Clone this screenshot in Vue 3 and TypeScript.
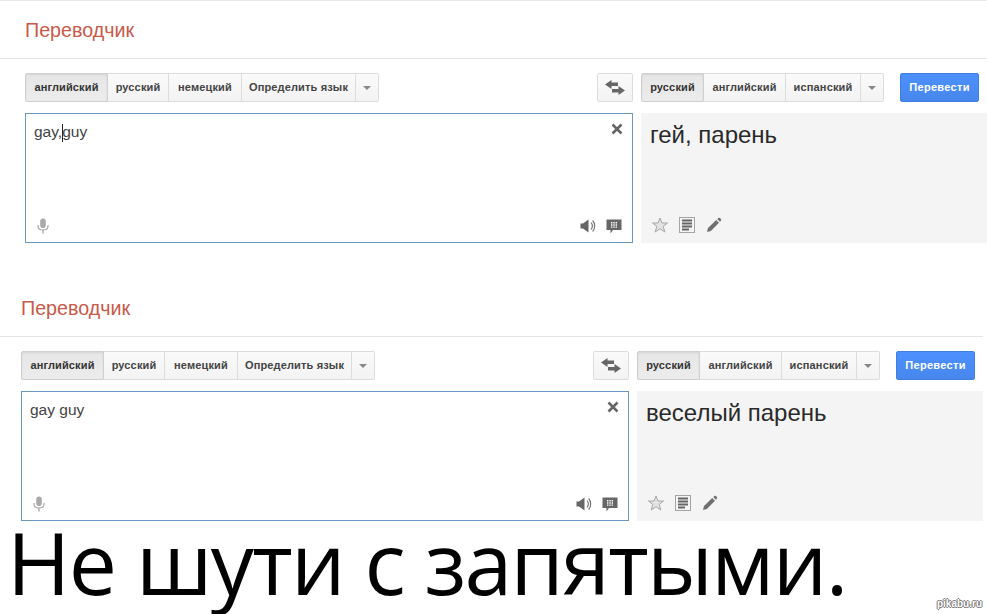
<script setup lang="ts">
interface Lang { label: string; width: number; active?: boolean }
interface Sheet { key: string; shift: boolean; source: string; caret: boolean; result: string }

const sourceLangs: Lang[] = [
  { label: 'английский', width: 83, active: true },
  { label: 'русский', width: 61 },
  { label: 'немецкий', width: 73 },
  { label: 'Определить язык', width: 114 },
]
const targetLangs: Lang[] = [
  { label: 'русский', width: 63, active: true },
  { label: 'английский', width: 82 },
  { label: 'испанский', width: 75 },
]
const sheets: Sheet[] = [
  { key: 'a', shift: false, source: 'gay,', caret: true, result: 'гей, парень' },
  { key: 'b', shift: true, source: 'gay ', caret: false, result: 'веселый парень' },
]
</script>

<template>
  <div class="page">
    <section v-for="s in sheets" :key="s.key" class="sheet" :class="{ shift: s.shift }">
      <header class="head"><h1 class="title">Переводчик</h1></header>
      <div class="grid">
        <div class="bar">
          <div class="group">
            <button v-for="l in sourceLangs" :key="l.label" class="tab" :class="{ on: l.active }" :style="{ width: l.width + 'px' }">{{ l.label }}</button>
            <button class="tab more"><i class="tri"></i></button>
          </div>
          <button class="swap" aria-label="swap">
            <svg width="20" height="15" viewBox="0 0 20 15"><path d="M0 4.5 L6.5 0 V2.5 H13 V6 H6.5 V9 Z M20 10.5 L13.5 15 V12.5 H7 V9 H13.5 V6 Z" fill="#666"/></svg>
          </button>
        </div>
        <div class="bar right">
          <div class="group">
            <button v-for="l in targetLangs" :key="l.label" class="tab" :class="{ on: l.active }" :style="{ width: l.width + 'px' }">{{ l.label }}</button>
            <button class="tab more"><i class="tri"></i></button>
          </div>
          <button class="go">Перевести</button>
        </div>

        <div class="panel src">
          <div class="src-text">{{ s.source }}<span v-if="s.caret" class="caret"></span>guy</div>
          <svg class="close" width="12" height="12" viewBox="0 0 12 12"><path d="M1.5 1.5 L10.5 10.5 M10.5 1.5 L1.5 10.5" stroke="#666" stroke-width="2.6"/></svg>
          <div class="foot">
            <svg width="12" height="16" viewBox="0 0 12 16"><rect x="3.2" y="0.5" width="5.6" height="9.5" rx="2.8" fill="#aaa"/><path d="M1 7 V8 C1 10.5 3 12 6 12 C9 12 11 10.5 11 8 V7" fill="none" stroke="#aaa" stroke-width="1.2"/><path d="M6 12 V15.5" stroke="#aaa" stroke-width="1.4"/></svg>
            <div class="tools">
              <svg width="16" height="16" viewBox="0 0 16 16"><path d="M0.5 5.5 H3 L8.5 1.5 V14.5 L3 10.5 H0.5 Z" fill="#666"/><path d="M11 4.5 C12.6 6.5 12.6 9.5 11 11.5 M12.6 2.5 C15.4 5.5 15.4 10.5 12.6 13.5" fill="none" stroke="#777" stroke-width="1.2"/></svg>
              <svg width="16" height="15" viewBox="0 0 16 15"><path d="M0.5 0.5 H15.5 V11 H7 L4.5 14.5 V11 H0.5 Z" fill="#666"/><path d="M5 3 h1.4 v1.4 h-1.4 z M7.3 3 h1.4 v1.4 h-1.4 z M9.6 3 h1.4 v1.4 h-1.4 z M5 5.3 h1.4 v1.4 h-1.4 z M7.3 5.3 h1.4 v1.4 h-1.4 z M9.6 5.3 h1.4 v1.4 h-1.4 z M5 7.6 h1.4 v1.2 h-1.4 z M7.3 7.6 h1.4 v1.2 h-1.4 z M9.6 7.6 h1.4 v1.2 h-1.4 z" fill="#fff"/></svg>
            </div>
          </div>
        </div>

        <div class="panel dst">
          <div class="dst-text">{{ s.result }}</div>
          <div class="foot left">
            <svg width="16" height="16" viewBox="0 0 16 16"><path d="M8 1 L10 6 H15.5 L11.2 9.4 L12.8 15 L8 11.8 L3.2 15 L4.8 9.4 L0.5 6 H6 Z" fill="#e2e2e2" stroke="#a6a6a6" stroke-width="1"/></svg>
            <svg width="16" height="16" viewBox="0 0 16 16"><rect x="0.5" y="0.5" width="15" height="15" fill="none" stroke="#555" stroke-width="1" stroke-dasharray="1 1"/><path d="M3 3.5 H13 M3 6.5 H13 M3 9.5 H13 M3 12.5 H10" stroke="#666" stroke-width="1.8"/></svg>
            <svg width="16" height="16" viewBox="0 0 16 16"><path d="M1 15 L2 11 L10.2 3 L13 5.8 L4.9 14 Z M11.2 2 L12.4 1 C12.9 0.6 13.4 0.6 13.9 1 L15 2.1 C15.4 2.6 15.4 3.1 15 3.6 L14 4.8 Z" fill="#707070"/></svg>
          </div>
        </div>
      </div>
    </section>
    <p class="punch">Не шути с запятыми.</p>
    <span class="mark">pikabu.ru</span>
  </div>
</template>

<style scoped>
.page {
  position: relative;
  width: 987px;
  height: 614px;
  overflow: hidden;
  background: #fff;
  border-top: 1px solid #e8e8e8;
  box-sizing: border-box;
  font-family: "Liberation Sans", Arial, sans-serif;
  color: #444;
}
.sheet { --inset: 25px; width: 987px; margin-bottom: 36px; }
.sheet.shift { --inset: 21px; width: 983px; margin-bottom: 0; }
.head {
  box-sizing: border-box;
  height: 58px;
  padding-left: var(--inset);
  border-bottom: 1px solid #e5e5e5;
  display: flex;
  align-items: center;
}
.title { margin: 1px 0 0; font-size: 19.7px; font-weight: 400; color: #c9594a; }
.grid {
  display: grid;
  grid-template-columns: 608px 346px;
  column-gap: 8px;
  row-gap: 11px;
  padding: 14px 0 0 var(--inset);
}
.bar { display: flex; justify-content: space-between; height: 29px; }
.bar.right { justify-content: flex-start; gap: 16px; }
.group { display: flex; }
button { font-family: inherit; margin: 0; padding: 0; cursor: default; }
.tab {
  box-sizing: border-box;
  height: 29px;
  padding-bottom: 2px;
  border: 1px solid #dcdcdc;
  border-left-width: 0;
  background: linear-gradient(#fafafa, #f3f3f3);
  color: #444;
  font-size: 11px;
  font-weight: 700;
  letter-spacing: 0.15px;
  white-space: nowrap;
}
.tab:first-child { border-left-width: 1px; border-radius: 2px 0 0 2px; }
.tab.on { background: linear-gradient(#e6e6e6, #ececec); border-color: #cfcfcf; box-shadow: inset 0 1px 2px rgba(0,0,0,.08); color: #333; }
.tab.more { width: 23px; padding-bottom: 0; border-radius: 0 2px 2px 0; display: flex; align-items: center; justify-content: center; }
.tri { width: 0; height: 0; border: 4px solid transparent; border-top: 4px solid #888; border-bottom: 0; }
.swap {
  box-sizing: border-box;
  width: 36px;
  height: 29px;
  border: 1px solid #dcdcdc;
  border-radius: 2px;
  background: linear-gradient(#fafafa, #f3f3f3);
  display: flex;
  align-items: center;
  justify-content: center;
}
.go {
  box-sizing: border-box;
  width: 79px;
  height: 29px;
  padding-bottom: 2px;
  border: 1px solid #3f7fe0;
  border-radius: 2px;
  background: linear-gradient(#4d90fe, #4787ed);
  color: #fff;
  font-size: 11px;
  font-weight: 700;
  letter-spacing: 0.3px;
}
.panel { box-sizing: border-box; height: 130px; position: relative; display: flex; flex-direction: column; justify-content: space-between; }
.src { border: 1px solid #6a98c0; padding: 8px; }
.dst { background: #f4f4f4; padding: 8px 9px 10px 9px; }
.src-text { font-size: 15.5px; line-height: 19px; color: #444; }
.caret { display: inline-block; width: 1px; height: 18px; margin-right: -1px; vertical-align: -5px; background: #223; }
.dst-text { font-size: 24px; line-height: 28px; color: #2a2a2a; }
.close { position: absolute; top: 9px; right: 9px; }
.foot { display: flex; align-items: flex-end; justify-content: space-between; padding: 0 2px 0 3px; }
.foot.left { justify-content: flex-start; gap: 11px; padding: 0 0 0 2px; }
.tools { display: flex; align-items: center; gap: 10px; }
.punch {
  margin: 0;
  padding-left: 7px;
  font-family: "Open Sans", "Noto Sans", sans-serif;
  font-size: 86px;
  letter-spacing: -1.7px;
  line-height: 82px;
  color: #000;
  white-space: nowrap;
}
.mark {
  position: absolute;
  right: 5px;
  bottom: 5px;
  font-size: 10px;
  font-weight: 700;
  color: #fff;
  text-shadow: -1px 0 #777, 1px 0 #777, 0 -1px #777, 0 1px #777;
}
</style>
